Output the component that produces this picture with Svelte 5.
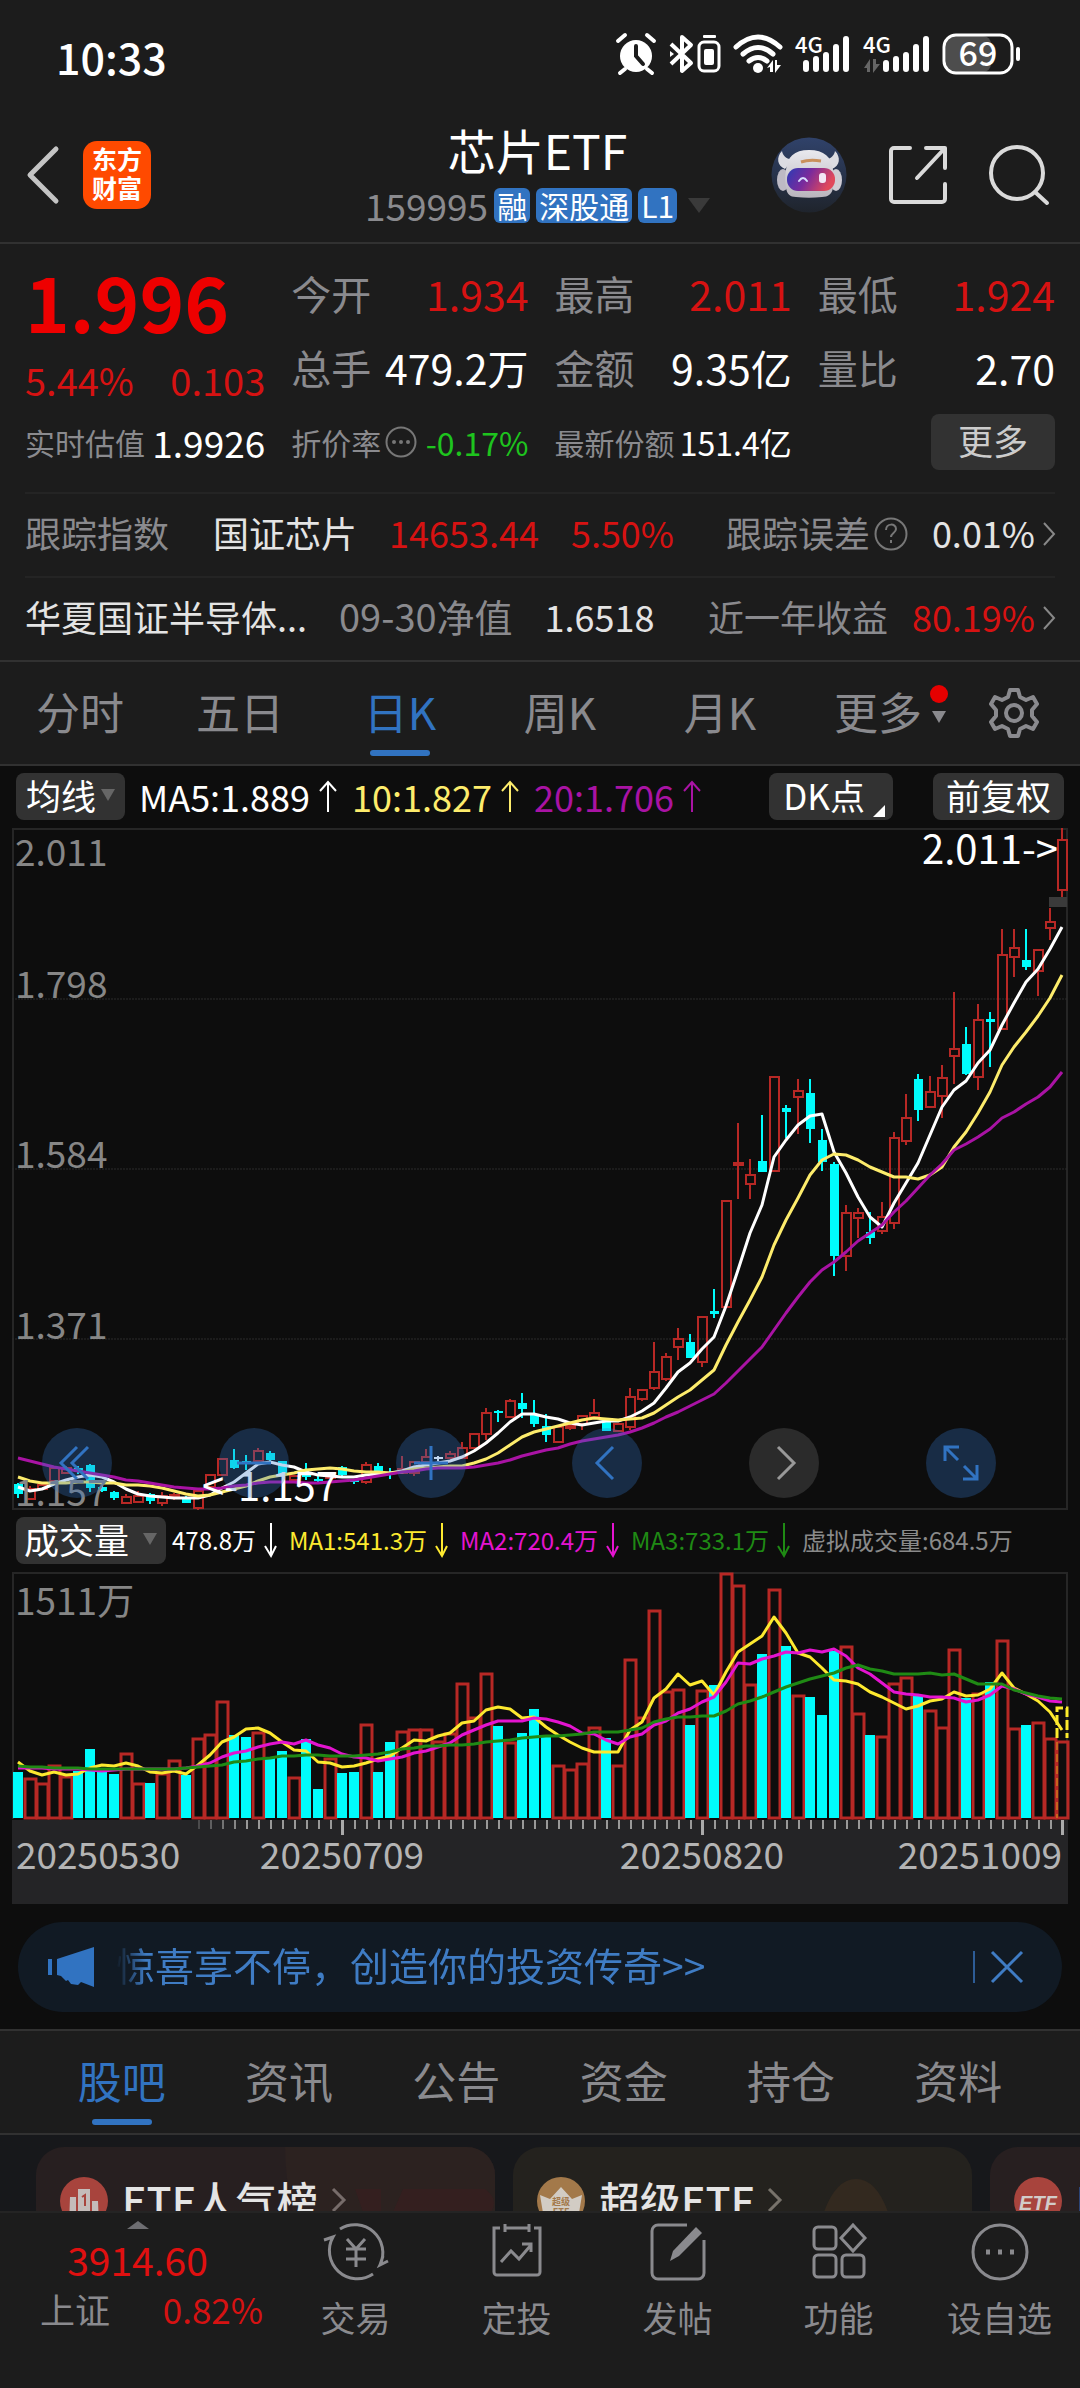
<script>
  // ETF quote page: header, quote table, daily K chart, volume chart, bottom bar

  const step = 12;
  const first = 6;
  const cx = (i) => first + i * step;

  // [up, high, body top, body bottom, low] in chart units, 0 is 2.011 and 682 is 1.157
  const candles = [
    [0, 655, 656, 666, 670], [1, 658, 661, 671, 671], [1, 656, 657, 661, 661], [1, 640, 640, 653, 653],
    [1, 638, 640, 645, 645], [0, 638, 640, 644, 646], [0, 636, 637, 660, 664], [0, 655, 659, 663, 664],
    [0, 663, 664, 670, 672], [1, 666, 669, 675, 676], [1, 663, 668, 674, 674], [0, 665, 666, 673, 676],
    [1, 664, 668, 675, 678], [1, 665, 667, 669, 672], [0, 668, 669, 675, 675], [1, 661, 663, 680, 682],
    [1, 647, 647, 659, 659], [1, 631, 631, 647, 647], [0, 621, 632, 640, 641], [0, 627, 633, 635, 642],
    [1, 620, 623, 633, 635], [0, 623, 625, 632, 633], [0, 633, 633, 647, 647], [1, 647, 648, 652, 652],
    [0, 635, 646, 649, 652], [0, 646, 651, 653, 654], [1, 644, 645, 650, 650], [0, 638, 639, 647, 650],
    [0, 651, 652, 654, 656], [1, 634, 637, 654, 656], [0, 635, 638, 643, 644], [0, 640, 645, 646, 651],
    [1, 628, 641, 645, 645], [1, 634, 634, 645, 648], [1, 621, 629, 634, 634], [2, 628, 629, 631, 633],
    [1, 623, 626, 630, 630], [1, 614, 620, 630, 630], [1, 606, 606, 620, 620], [1, 580, 585, 606, 612],
    [0, 582, 583, 585, 594], [1, 571, 573, 589, 589], [0, 565, 575, 581, 590], [0, 572, 587, 596, 599],
    [0, 586, 598, 607, 614], [1, 599, 599, 614, 614], [1, 596, 598, 600, 602], [1, 588, 588, 596, 602],
    [1, 571, 585, 589, 589], [0, 593, 594, 603, 603], [1, 596, 596, 603, 603], [1, 560, 569, 599, 602],
    [1, 562, 562, 571, 573], [1, 514, 544, 560, 562], [1, 525, 529, 551, 553], [1, 500, 511, 519, 532],
    [0, 506, 514, 530, 530], [1, 489, 489, 534, 539], [0, 461, 483, 486, 490], [1, 373, 373, 479, 479],
    [1, 295, 335, 337, 371], [1, 331, 347, 356, 371], [0, 287, 333, 344, 344], [1, 249, 249, 343, 343],
    [0, 277, 280, 284, 310], [1, 251, 263, 269, 306], [0, 251, 265, 301, 315], [0, 301, 312, 334, 343],
    [0, 334, 336, 428, 448], [1, 377, 385, 428, 443], [1, 380, 385, 390, 410], [0, 384, 404, 410, 416],
    [1, 374, 389, 403, 406], [1, 304, 310, 395, 401], [1, 266, 290, 313, 317], [0, 246, 251, 282, 293],
    [1, 248, 264, 279, 279], [1, 237, 250, 268, 290], [1, 164, 221, 228, 256], [0, 199, 216, 246, 247],
    [1, 176, 192, 249, 262], [0, 184, 191, 194, 239], [1, 101, 127, 201, 201], [1, 101, 120, 129, 149],
    [0, 101, 132, 139, 142], [1, 122, 122, 143, 168], [1, 80, 94, 100, 112], [1, 0, 12, 62, 69],
  ];

  const ma5 = [
    659, 663, 661, 656, 652, 649, 647, 649, 654, 661, 666, 668, 669, 670, 670, 670, 667, 660, 654, 645, 636, 634,
    637, 639, 644, 647, 648, 649, 649, 647, 646, 645, 643, 639, 637, 635, 633, 629, 623, 615, 605, 594, 586, 586,
    589, 591, 595, 597, 595, 593, 593, 589, 583, 575, 560, 544, 535, 521, 509, 478, 442, 405, 377, 329, 312, 297,
    288, 286, 324, 345, 369, 389, 399, 375, 355, 335, 307, 279, 262, 253, 235, 222, 197, 175, 154, 141, 121, 99,
  ];
  const ma10 = [
    649, 653, 655, 655, 655, 654, 654, 655, 655, 657, 657, 658, 660, 663, 666, 668, 667, 664, 661, 658, 653, 649,
    647, 645, 642, 641, 640, 641, 643, 644, 644, 645, 644, 641, 640, 639, 638, 638, 635, 631, 625, 617, 609, 604,
    601, 598, 595, 592, 590, 591, 592, 591, 590, 585, 577, 569, 562, 552, 542, 517, 494, 472, 449, 417, 392, 370,
    347, 332, 326, 327, 332, 339, 344, 349, 349, 351, 347, 339, 319, 304, 285, 264, 237, 219, 204, 188, 170, 147,
  ];
  const ma20 = [
    630, 633, 636, 639, 641, 643, 645, 647, 649, 652, 653, 655, 657, 659, 660, 661, 661, 660, 658, 657, 655, 654,
    654, 654, 655, 655, 654, 653, 652, 650, 648, 646, 644, 643, 641, 640, 640, 640, 639, 637, 635, 632, 628, 625,
    622, 620, 616, 613, 611, 609, 607, 604, 600, 595, 589, 584, 578, 572, 566, 555, 543, 531, 519, 502, 485, 469,
    454, 442, 434, 424, 413, 405, 397, 384, 373, 360, 347, 336, 322, 316, 309, 301, 290, 284, 276, 269, 259, 244,
  ];

  // top edge of every volume bar, the base line is 246
  const volumes = [
    200, 206, 211, 193, 204, 199, 177, 199, 202, 181, 211, 211, 201, 188, 203, 166, 162, 129, 163, 165, 160, 186,
    179, 205, 167, 217, 186, 201, 200, 152, 200, 170, 159, 157, 157, 169, 161, 111, 145, 101, 154, 170, 161, 137,
    165, 193, 197, 191, 155, 166, 193, 87, 145, 38, 119, 117, 153, 118, 113, 1, 13, 112, 82, 17, 74, 123,
    125, 143, 79, 74, 141, 163, 164, 111, 105, 124, 138, 155, 77, 126, 121, 110, 68, 156, 153, 150, 166, 169,
  ];
  const vol1 = [
    190, 199, 203, 200, 203, 202, 196, 193, 194, 191, 194, 200, 201, 199, 202, 193, 183, 170, 165, 157, 156, 161,
    170, 178, 179, 190, 191, 195, 194, 191, 187, 184, 176, 168, 169, 164, 161, 151, 149, 138, 135, 137, 146, 145,
    155, 163, 170, 176, 180, 180, 180, 158, 150, 126, 117, 102, 113, 109, 123, 100, 80, 72, 64, 45, 61, 81,
    85, 96, 108, 109, 112, 120, 125, 131, 137, 134, 129, 127, 120, 124, 123, 117, 101, 116, 122, 129, 140, 158,
  ];
  const vol2 = [
    196, 196, 196, 197, 197, 197, 198, 199, 198, 197, 197, 197, 197, 197, 196, 194, 191, 185, 181, 179, 175, 172,
    170, 172, 168, 173, 176, 182, 185, 186, 189, 187, 185, 181, 179, 175, 171, 163, 158, 153, 149, 149, 149, 146,
    147, 150, 154, 161, 162, 168, 172, 165, 162, 153, 149, 141, 137, 130, 125, 110, 91, 92, 87, 84, 80, 81,
    78, 80, 77, 84, 96, 102, 111, 120, 122, 123, 125, 125, 126, 130, 128, 123, 114, 117, 122, 125, 129, 130,
  ];
  const vol3 = [
    194, 195, 195, 196, 196, 196, 197, 197, 197, 197, 197, 197, 197, 197, 196, 195, 194, 193, 190, 189, 187, 186,
    184, 184, 183, 183, 184, 184, 184, 183, 182, 180, 177, 176, 174, 174, 173, 173, 172, 170, 169, 168, 166, 165,
    164, 164, 163, 162, 160, 160, 160, 158, 156, 150, 147, 145, 145, 144, 144, 139, 132, 129, 125, 120, 115, 111,
    107, 104, 101, 96, 93, 97, 99, 102, 102, 102, 101, 103, 102, 107, 112, 112, 112, 118, 121, 124, 126, 127,
  ];

  const line = (values) => values.map((y, i) => `${cx(i)},${y}`).join(" ");

  const stats = [
    ["今开", "1.934", "red"],
    ["最高", "2.011", "red"],
    ["最低", "1.924", "red"],
    ["总手", "479.2万", ""],
    ["金额", "9.35亿", ""],
    ["量比", "2.70", ""],
  ];

  const grid = [
    [38, "2.011"],
    [170, "1.798"],
    [340, "1.584"],
    [511, "1.371"],
    [678, "1.157"],
  ];

  const periods = ["分时", "五日", "日K", "周K", "月K"];
  const sections = ["股吧", "资讯", "公告", "资金", "持仓", "资料"];

  const averages = [
    ["MA5:1.889", "white"],
    ["10:1.827", "yellow"],
    ["20:1.706", "purple"],
  ];
  const volumeAverages = [
    ["478.8万", "white"],
    ["MA1:541.3万", "lemon"],
    ["MA2:720.4万", "magenta"],
    ["MA3:733.1万", "green"],
  ];

  let period = $state("日K");
  let section = $state("股吧");
  let showBanner = $state(true);
</script>

{#snippet bars(x)}
  {#each [12, 16, 20, 28, 36] as h, i}
    <rect x={x + i * 10} y={38 - h} width="6" height={h} rx="3" />
  {/each}
{/snippet}

<div class="page">
  <div class="status">
    <span class="time">10:33</span>
    <svg width="408" height="44" viewBox="0 0 408 44" fill="#fff" aria-hidden="true">
      <!-- alarm -->
      <circle cx="20" cy="22" r="16" />
      <path d="M2 7l7-6M38 7l-7-6M9 35l-5 4M31 35l5 4" stroke="#fff" stroke-width="4" stroke-linecap="round" />
      <path d="M20 12v10l7 8" fill="none" stroke="#1c1c1c" stroke-width="4" stroke-linecap="round" />
      <!-- bluetooth and device battery -->
      <path d="M55 10l20 19-9 8V3l9 8-20 19" fill="none" stroke="#fff" stroke-width="4" stroke-linejoin="round" />
      <path d="M54 17l4 3-4 3z" />
      <rect x="87" y="1" width="13" height="3" rx="1" />
      <rect x="83" y="8" width="20" height="29" rx="5" fill="none" stroke="#fff" stroke-width="3" />
      <rect x="88" y="15" width="10" height="16" rx="2" />
      <!-- wifi -->
      <g fill="none" stroke="#fff" stroke-width="5" stroke-linecap="round">
        <path d="M120 13q22-20 44 0" />
        <path d="M127 20q15-13 30 0" />
        <path d="M133 27q9-7 18 0" />
      </g>
      <circle cx="142" cy="34" r="5" />
      <path d="M151 34l6-8v12h-3v-5zM159 26h2v5h4l-6 8z" />
      <!-- mobile signals -->
      <text x="179" y="19" class="net">4G</text>
      {@render bars(187)}
      <text x="247" y="19" class="net">4G</text>
      <path d="M248 34l6-9v13h-3v-4zM257 25h3v5h4l-7 9z" fill="#666" />
      {@render bars(267)}
      <!-- battery -->
      <rect x="330" y="2" width="45" height="36" fill="#4d4d4d" rx="8" />
      <rect x="328" y="1" width="68" height="38" rx="12" fill="none" stroke="#fff" stroke-width="3" />
      <rect x="400" y="13" width="4" height="14" rx="2" />
      <text x="362" y="32" class="level">69</text>
    </svg>
  </div>

  <header>
    <div class="side">
      <button class="plain" aria-label="返回">
        <svg width="34" height="60" viewBox="0 0 34 60" fill="none" stroke="#c4c4c4" stroke-width="5" stroke-linecap="round" stroke-linejoin="round">
          <path d="M30 4L4 30l26 26" />
        </svg>
      </button>
      <div class="logo"><span>东方</span><span>财富</span></div>
    </div>
    <div class="title">
      <h1>芯片ETF</h1>
      <div class="code">
        <span>159995</span>
        <b>融</b><b>深股通</b><b>L1</b>
        <svg width="22" height="15" viewBox="0 0 22 15"><path d="M0 0h22L11 15z" fill="#3a3a3a" /></svg>
      </div>
    </div>
    <div class="side end">
      <button class="plain" aria-label="智能助手">
        <svg width="76" height="76" viewBox="0 0 76 76">
          <defs>
            <linearGradient id="disc" x1="0" y1="0" x2="0" y2="1">
              <stop offset="0" stop-color="#30426a" />
              <stop offset="1" stop-color="#1f242c" />
            </linearGradient>
            <linearGradient id="visor" x1="0" y1="0" x2="1" y2="0.3">
              <stop offset="0" stop-color="#2b3bb5" />
              <stop offset="0.5" stop-color="#7a2a9c" />
              <stop offset="1" stop-color="#e0485c" />
            </linearGradient>
            <linearGradient id="helmet" x1="0" y1="0" x2="0" y2="1">
              <stop offset="0" stop-color="#e9e9ee" />
              <stop offset="1" stop-color="#b9b5bd" />
            </linearGradient>
          </defs>
          <circle cx="38" cy="38" r="37.5" fill="url(#disc)" />
          <path d="M11 14c-6 6-5 15 3 18l8-10c-6 1-10-3-11-8zM64 14c6 6 5 15-3 18l-8-10c6 1 10-3 11-8z" fill="#dcdce2" />
          <ellipse cx="12" cy="43" rx="6" ry="11" fill="#bdbac4" />
          <ellipse cx="65" cy="43" rx="6" ry="11" fill="#cfccd4" />
          <path d="M38 13c15 0 23 7 24 20 1 6 1 13 0 18-1 6-5 9-11 9-9 1-17 1-26 0-6 0-9-3-10-9-1-6-1-12 0-18 1-13 8-20 23-20z" fill="url(#helmet)" />
          <rect x="16" y="31" width="48" height="23" rx="11" fill="url(#visor)" />
          <path d="M30 25c6-2 13-2 20-1" stroke="#c9905c" stroke-width="3" fill="none" />
          <path d="M28 44q4-6 8 0" stroke="#d9dcff" stroke-width="2" fill="none" stroke-linecap="round" />
          <rect x="48" y="36" width="7" height="10" rx="3" fill="#f3e6f5" />
        </svg>
      </button>
      <button class="plain" aria-label="分享">
        <svg width="60" height="60" viewBox="0 0 60 60" fill="none" stroke="#dadada" stroke-width="4" stroke-linecap="round" stroke-linejoin="round">
          <path d="M22 3H6a3 3 0 0 0-3 3v48a3 3 0 0 0 3 3h48a3 3 0 0 0 3-3V39M38 3h19v20M57 3L29 33" />
        </svg>
      </button>
      <button class="plain" aria-label="搜索">
        <svg width="60" height="60" viewBox="0 0 60 60" fill="none" stroke="#dadada" stroke-width="4" stroke-linecap="round">
          <circle cx="28" cy="28" r="26" />
          <path d="M46 47l12 11" />
        </svg>
      </button>
    </div>
  </header>

  <section class="quote">
    <div class="last">
      <strong>1.996</strong>
      <div class="change"><span>5.44%</span><span>0.103</span></div>
    </div>
    {#each stats as [name, value, tone]}
      <div class="stat"><span>{name}</span><em class={tone}>{value}</em></div>
    {/each}
    <div class="stat small"><span>实时估值</span><em class="wide">1.9926</em></div>
    <div class="stat small">
      <span class="tip">
        折价率
        <svg width="32" height="32" viewBox="0 0 32 32" fill="#777"><circle cx="16" cy="16" r="14.5" fill="none" stroke="#777" stroke-width="2" /><circle cx="9" cy="16" r="2" /><circle cx="16" cy="16" r="2" /><circle cx="23" cy="16" r="2" /></svg>
      </span>
      <em class="down">-0.17%</em>
    </div>
    <div class="stat small"><span>最新份额</span><em>151.4亿</em></div>
    <div class="more"><button>更多</button></div>
  </section>

  <section class="facts">
    <a class="fact" href="#index">
      <span class="mute name">跟踪指数</span>
      <span>国证芯片</span>
      <span class="red">14653.44</span>
      <span class="red">5.50%</span>
      <span class="mute tip right">
        跟踪误差
        <svg width="34" height="34" viewBox="0 0 34 34" fill="none" stroke="#777" stroke-width="2"><circle cx="17" cy="17" r="15.5" /><path d="M12 13c0-7 10-7 10-1 0 4-5 4-5 8" /><path d="M17 23v3" /></svg>
      </span>
      <span class="result">
        0.01%
        <svg width="12" height="24" viewBox="0 0 12 24" fill="none" stroke="#888" stroke-width="2"><path d="M1 1l10 11L1 23" /></svg>
      </span>
    </a>
    <a class="fact" href="#fund">
      <span>华夏国证半导体...</span>
      <span class="mute nav">09-30净值</span>
      <span>1.6518</span>
      <span class="mute right">近一年收益</span>
      <span class="result red">
        80.19%
        <svg width="12" height="24" viewBox="0 0 12 24" fill="none" stroke="#888" stroke-width="2"><path d="M1 1l10 11L1 23" /></svg>
      </span>
    </a>
  </section>

  <nav class="tabs periods">
    {#each periods as name}
      <button class:active={period === name} onclick={() => (period = name)}>{name}</button>
    {/each}
    <button class="others">
      更多
      <svg width="18" height="40" viewBox="0 0 18 40"><circle cx="9" cy="7" r="9" fill="#e60000" /><path d="M2 24h14L9 36z" fill="#8a8a8e" /></svg>
    </button>
    <button class="gear" aria-label="设置">
      <svg width="52" height="52" viewBox="0 0 52 52" fill="none" stroke="#8a8a8e" stroke-width="4" stroke-linejoin="round">
        <path d="M22 3h8l2 7 6 3 7-3 4 7-5 6v6l5 6-4 7-7-3-6 3-2 7h-8l-2-7-6-3-7 3-4-7 5-6v-6l-5-6 4-7 7 3 6-3z" />
        <circle cx="26" cy="26" r="8" />
      </svg>
    </button>
  </nav>

  <main>
    <div class="legend">
      <button class="chip">均线<svg width="14" height="12" viewBox="0 0 14 12"><path d="M0 0h14L7 12z" fill="#666" /></svg></button>
      {#each averages as [text, tone]}
        <span class={tone}>
          {text}
          <svg width="20" height="32" viewBox="0 0 20 32" fill="none" stroke="currentColor" stroke-width="2"><path d="M10 32V2M2 11l8-9 8 9" /></svg>
        </span>
      {/each}
      <button class="chip dk">DK点<svg width="12" height="12" viewBox="0 0 12 12"><path d="M12 0v12H0z" fill="#fff" /></svg></button>
      <button class="chip adjust">前复权</button>
    </div>

    <div class="chart">
      <svg viewBox="0 0 1056 682">
        <g fill="none" stroke="#262626" stroke-width="2">
          <path d="M1 1h1054v680H1z" />
          <path d="M0 171h1056M0 341h1056M0 511h1056" stroke="#2c2c2c" stroke-width="1" stroke-dasharray="2 1" />
        </g>
        <rect x="1037" y="69" width="18" height="10" fill="#3a3a3a" />
        {#each candles as [up, high, top, bottom, low], i}
          {#if up === 1}
            <g fill="none" stroke="#b72825" stroke-width="2">
              <path d="M{cx(i)} {high}V{top}M{cx(i)} {bottom}V{low}" />
              <rect x={cx(i) - 4} y={top} width="9" height={bottom - top} />
            </g>
          {:else}
            <g fill={up ? "#fff" : "#00fcfc"}>
              <rect x={cx(i) - 1} y={high} width="2" height={low - high} />
              <rect x={cx(i) - 4} y={top} width="9" height={bottom - top} />
            </g>
          {/if}
        {/each}
        <g fill="none" stroke-width="3" stroke-linejoin="round">
          <polyline points={line(ma5)} stroke="#fff" />
          <polyline points={line(ma10)} stroke="#fdec6c" />
          <polyline points={line(ma20)} stroke="#a913a4" />
        </g>
        {#each grid as [y, label]}
          <text x="3" {y} class="scale">{label}</text>
        {/each}
        <text x="1046" y="36" class="mark" text-anchor="end">2.011-&gt;</text>
        <text x="190" y="673" class="mark">&lt;-1.157</text>
      </svg>
      <div class="tools">
        <button aria-label="最早"><svg viewBox="0 0 70 70"><path d="M35 19L19 35l16 16M46 19L30 35l16 16" /></svg></button>
        <button aria-label="缩小"><svg viewBox="0 0 70 70"><path d="M18 35h34" /></svg></button>
        <button aria-label="放大"><svg viewBox="0 0 70 70"><path d="M18 35h34M35 18v34" /></svg></button>
        <button aria-label="前移"><svg viewBox="0 0 70 70"><path d="M41 19L25 35l16 16" /></svg></button>
        <button aria-label="后移" class="off"><svg viewBox="0 0 70 70"><path d="M29 19l16 16-16 16" /></svg></button>
        <button aria-label="全屏"><svg viewBox="0 0 70 70"><path d="M19 33V19h14M19 19l13 13M51 37v14H37M51 51L38 38" /></svg></button>
      </div>
    </div>

    <div class="legend volume">
      <button class="chip">成交量<svg width="14" height="12" viewBox="0 0 14 12"><path d="M0 0h14L7 12z" fill="#666" /></svg></button>
      {#each volumeAverages as [text, tone]}
        <span class={tone}>
          {text}
          <svg width="13" height="34" viewBox="0 0 13 34" fill="none" stroke="currentColor" stroke-width="2"><path d="M7 0v32M1 23l6 10 5-10" /></svg>
        </span>
      {/each}
      <span class="grey">虚拟成交量:684.5万</span>
    </div>

    <div class="chart">
      <svg viewBox="0 0 1056 332">
        <path d="M1 247V1h1054v246" fill="none" stroke="#262626" stroke-width="2" />
        {#each volumes as top, i}
          {#if candles[i][0]}
            <rect x={cx(i) - 5} y={top + 1} width="11" height={245 - top} fill="none" stroke="#b72825" stroke-width="3" />
          {/if}
        {/each}
        {#each volumes as top, i}
          {#if !candles[i][0]}
            <rect x={cx(i) - 5} y={top} width="10" height={246 - top} fill="#00fcfc" />
          {/if}
        {/each}
        <path d="M1045 166V136h10v30" fill="none" stroke="#fdec2c" stroke-width="3" stroke-dasharray="10 3" />
        <path d="M1045 170v76" stroke="#c8641e" stroke-width="2" stroke-dasharray="8 4" />
        <g fill="none" stroke-width="3" stroke-linejoin="round">
          <polyline points={line(vol1)} stroke="#fde92f" />
          <polyline points={line(vol2)} stroke="#e414d0" />
          <polyline points={line(vol3)} stroke="#1f8a14" />
        </g>
        <text x="3" y="43" class="scale">1511万</text>

        <rect y="248" width="1056" height="84" fill="#242426" />
        {#each volumes as _, i}
          {#if i === 27 || i === 57 || i === 87}
            <rect x={cx(i) - 1} y="248" width="3" height="15" fill="#aaa" />
          {:else if i > 14}
            <rect x={cx(i)} y="248" width="2" height="9" fill="#999" opacity={Math.min(1, (i - 13) / 6)} />
          {/if}
        {/each}
        <g class="dates">
          <text x="4" y="297">20250530</text>
          <text x="330" y="297" text-anchor="middle">20250709</text>
          <text x="690" y="297" text-anchor="middle">20250820</text>
          <text x="1050" y="297" text-anchor="end">20251009</text>
        </g>
      </svg>
    </div>

    {#if showBanner}
      <div class="banner">
        <svg width="46" height="40" viewBox="0 0 46 40" fill="#3173c1"><path d="M0 12h4v16H0zM9 12L46 0v40l-13-5-3 3-7-1-3-4-2 1-5-5-4-1z" /></svg>
        <a href="#promo">惊喜享不停，创造你的投资传奇&gt;&gt;</a>
        <button class="plain" aria-label="关闭" onclick={() => (showBanner = false)}>
          <svg width="32" height="32" viewBox="0 0 32 32" stroke="#3f7cc4" stroke-width="3"><path d="M1 1l30 30M31 1L1 31" /></svg>
        </button>
      </div>
    {/if}
  </main>

  <nav class="tabs sections">
    {#each sections as name}
      <button class:active={section === name} onclick={() => (section = name)}>{name}</button>
    {/each}
  </nav>

  <div class="cards">
    <a class="card rank" href="#rank">
      <svg width="48" height="48" viewBox="0 0 48 48">
        <circle cx="24" cy="24" r="24" fill="#a8443d" />
        <path d="M10 20h6v28h-7zM18 12h12v36H18zM32 24h6l1 24h-7z" fill="#c4bcba" />
        <path d="M22 20l3-2v11" fill="none" stroke="#a8443d" stroke-width="2" />
      </svg>
      ETF人气榜
      <svg width="13" height="24" viewBox="0 0 13 24" fill="none" stroke="#776c6a" stroke-width="3"><path d="M1 1l11 11L1 23" /></svg>
      <svg class="art" width="210" height="65" viewBox="0 0 210 65"><path d="M0 0h210v65H8Q0 30 0 0z" fill="#2c2220" /><path d="M70 42h26v23H78zM118 42h82q14 10 6 23H108z" fill="#341f1f" /></svg>
    </a>
    <a class="card super" href="#super">
      <svg width="48" height="48" viewBox="0 0 48 48">
        <circle cx="24" cy="24" r="24" fill="#a3794a" />
        <path d="M3 18l10 4 11-12 11 12 10-4-5 30H8z" fill="#d2ccc4" />
        <text x="24" y="28" class="badge">超级</text>
        <text x="24" y="38" class="badge">ETF</text>
      </svg>
      超级ETF
      <svg width="13" height="24" viewBox="0 0 13 24" fill="none" stroke="#77726a" stroke-width="3"><path d="M1 1l11 11L1 23" /></svg>
      <svg class="art" width="150" height="65" viewBox="0 0 150 65"><path d="M2 65Q14 32 34 32t32 33z" fill="#33291f" /></svg>
    </a>
    <a class="card rank" href="#etf">
      <svg width="48" height="48" viewBox="0 0 48 48">
        <circle cx="24" cy="24" r="24" fill="#a8443d" />
        <text x="24" y="33" class="etf">ETF</text>
      </svg>
      ETF
    </a>
  </div>

  <footer>
    <a class="index" href="#sse">
      <svg width="22" height="8" viewBox="0 0 22 8"><path d="M0 8L11 0l11 8z" fill="#6e6e72" /></svg>
      <strong>3914.60</strong>
      <div><span>上证</span><em>0.82%</em></div>
    </a>
    <button>
      <svg viewBox="0 0 66 60"><path d="M17 7A28 28 0 0 1 57 43l8-4M57 43l3-9M1 18l9-3A28 28 0 0 0 50 52M24 17l9 10 9-10M23 27h20M23 37h20M33 27v18" /></svg>
      交易
    </button>
    <button>
      <svg viewBox="0 0 66 60"><path d="M16 6h-6v44a3 3 0 0 0 3 3h40a3 3 0 0 0 3-3V6h-6M21 2v8M45 2v8M21 6h24M17 40l10-11 8 8 12-14M38 22h9v8" /></svg>
      定投
    </button>
    <button>
      <svg viewBox="0 0 66 60"><path d="M42 3H13a6 6 0 0 0-6 6v42a6 6 0 0 0 6 6h40a6 6 0 0 0 6-6V18" /><path d="M25 39l3-10L51 5l6 6-23 23z" fill="#8a8a8e" stroke="none" /></svg>
      发帖
    </button>
    <button>
      <svg viewBox="0 0 66 60"><rect x="8" y="5" width="22" height="22" rx="4" /><rect x="8" y="33" width="22" height="22" rx="4" /><rect x="36" y="33" width="22" height="22" rx="4" /><path d="M47 3l12 13-12 13-12-13z" /></svg>
      功能
    </button>
    <button>
      <svg viewBox="0 0 66 60"><circle cx="33" cy="30" r="27" /><path d="M19 30h4M31 30h4M43 30h4" stroke-width="5" /></svg>
      设自选
    </button>
  </footer>
</div>

<style>
  :global(body) {
    background: #1c1c1c;
  }

  .page {
    font-family: "Noto Sans CJK SC", "Noto Sans", sans-serif;
    font-size: 36px;
    line-height: 44px;
    color: #e4e4e4;
    background: #1c1c1c;
    overflow: hidden;
  }

  button {
    font: inherit;
    color: inherit;
    border: 0;
    padding: 0;
    background: none;
    cursor: pointer;
  }

  a {
    color: inherit;
    text-decoration: none;
  }

  em {
    font-style: normal;
  }

  svg {
    flex: none;
    overflow: visible;
  }

  .plain {
    display: flex;
  }

  .red {
    color: #d61212;
  }

  /* status bar */
  .status {
    display: flex;
    align-items: center;
    justify-content: space-between;
    height: 76px;
    padding: 18px 56px 10px;
  }

  .time {
    font-size: 43px;
    font-weight: 500;
    color: #fff;
  }

  .net {
    font-size: 22px;
    font-weight: 500;
  }

  .level {
    font-size: 34px;
    font-weight: 500;
    text-anchor: middle;
  }

  /* header */
  header {
    display: flex;
    align-items: center;
    height: 134px;
    padding: 4px 31px 0 26px;
    border-bottom: 2px solid #313131;
  }

  .side {
    display: flex;
    align-items: center;
    flex: 1;
    gap: 23px;
  }

  .end {
    justify-content: flex-end;
    gap: 41px;
  }

  .logo {
    display: flex;
    flex-direction: column;
    padding: 3px 9px 7px;
    border-radius: 14px;
    font-size: 25px;
    font-weight: 700;
    line-height: 29px;
    color: #fff;
    background: #ff4a00;
  }

  .title {
    display: flex;
    flex-direction: column;
    align-items: center;
    gap: 8px;
  }

  h1 {
    margin: 0;
    font-size: 48px;
    font-weight: 400;
    line-height: 52px;
    color: #fff;
  }

  .code {
    display: flex;
    align-items: center;
    gap: 6px;
    color: #8a8a8e;
  }

  .code span {
    font-size: 37px;
  }

  .code b {
    padding: 0 3px;
    border-radius: 6px;
    font-size: 30px;
    font-weight: 400;
    line-height: 35px;
    color: #fff;
    background: #3173c1;
  }

  .code svg {
    margin-left: 5px;
  }

  /* quote table */
  .quote {
    display: grid;
    grid-template-columns: 240fr 237fr 237fr 237fr;
    grid-template-rows: 74px 74px 76px;
    column-gap: 26px;
    padding: 12px 25px;
  }

  .last {
    grid-row: span 2;
    display: flex;
    flex-direction: column;
    justify-content: space-between;
    padding: 6px 0 2px;
    color: #d61212;
  }

  .last strong {
    font-size: 76px;
    font-weight: 700;
    line-height: 76px;
    color: #ee0000;
  }

  .change {
    display: flex;
    justify-content: space-between;
    font-size: 38px;
  }

  .stat {
    display: flex;
    align-items: center;
    justify-content: space-between;
    font-size: 40px;
    color: #8a8a8e;
    white-space: nowrap;
  }

  .stat em {
    font-size: 41px;
    color: #fff;
  }

  .stat em.red {
    color: #d61212;
  }

  .small span {
    font-size: 30px;
  }

  .small em {
    font-size: 32px;
  }

  .stat em.down {
    color: #1ec41e;
  }

  .small .wide {
    font-size: 37px;
  }

  .tip {
    display: flex;
    align-items: center;
    gap: 4px;
  }

  .more {
    display: flex;
    align-items: center;
    justify-content: flex-end;
  }

  .more button {
    padding: 4px 27px 8px;
    border-radius: 8px;
    font-size: 35px;
    color: #ccc;
    background: #323232;
  }

  /* tracked index and fund rows */
  .facts {
    padding: 0 25px;
  }

  .fact {
    display: flex;
    align-items: center;
    gap: 32px;
    height: 76px;
    padding-bottom: 6px;
    border-top: 2px solid #242424;
    white-space: nowrap;
  }

  .name {
    margin-right: 12px;
  }

  .nav {
    font-size: 38px;
  }

  .mute {
    color: #8a8a8e;
  }

  .fact svg {
    margin-top: 4px;
  }

  .right {
    margin-left: auto;
  }

  .result {
    display: flex;
    align-items: center;
    gap: 8px;
    margin-left: -8px;
  }

  /* tabs */
  .tabs {
    display: flex;
    height: 102px;
    border-top: 2px solid #313131;
    font-size: 44px;
    color: #8a8a8e;
  }

  .tabs button {
    position: relative;
    flex: 160;
    padding-bottom: 4px;
  }

  .tabs .active {
    color: #3173c1;
  }

  .tabs .active::after {
    content: "";
    position: absolute;
    left: calc(50% - 30px);
    bottom: 8px;
    width: 60px;
    height: 6px;
    border-radius: 3px;
    background: #3173c1;
  }

  .tabs .others {
    display: flex;
    align-items: center;
    justify-content: flex-end;
    gap: 8px;
    flex: 148;
  }

  .others svg {
    margin-bottom: 8px;
  }

  .tabs .gear {
    flex: 132;
    padding-bottom: 0;
  }

  .gear svg {
    display: block;
    margin: 0 auto;
  }

  .sections {
    padding: 0 38px;
    border-bottom: 2px solid #313131;
  }

  /* charts */
  main {
    padding: 0 12px 17px;
    border-top: 2px solid #313131;
    background: #0d0d0d;
  }

  .legend {
    display: flex;
    align-items: center;
    gap: 14px;
    height: 60px;
    padding: 0 4px 2px;
    white-space: nowrap;
  }

  .legend span {
    display: flex;
    align-items: center;
    gap: 8px;
  }

  .chip {
    display: flex;
    align-items: center;
    gap: 5px;
    padding: 0 10px 3px;
    border-radius: 8px;
    font-size: 35px;
    color: #fff;
    background: #323232;
  }

  .dk {
    gap: 8px;
    margin-left: auto;
    margin-right: 26px;
    padding: 0 8px 3px 14px;
  }

  .dk svg {
    align-self: flex-end;
  }

  .adjust {
    padding: 0 13px 3px;
  }

  .white {
    color: #fff;
  }

  .yellow {
    color: #fdec6c;
  }

  .purple {
    color: #a913a4;
  }

  .lemon {
    color: #fde92f;
  }

  .magenta {
    color: #e414d0;
  }

  .green {
    color: #1f8a14;
  }

  .grey {
    color: #8a8a8a;
  }

  .volume {
    gap: 12px;
    font-size: 24px;
  }

  .volume .chip {
    gap: 14px;
    margin-right: -6px;
    padding: 0 9px 3px 8px;
  }

  .chart {
    position: relative;
  }

  .chart > svg {
    display: block;
    width: 100%;
  }

  .scale {
    font-size: 37px;
    fill: #868686;
  }

  .mark {
    font-size: 40px;
    fill: #fff;
  }

  .dates {
    font-size: 37px;
    fill: #b4b4b4;
  }

  .tools {
    position: absolute;
    left: 0;
    right: 0;
    bottom: 12px;
    display: flex;
    justify-content: space-between;
    padding: 0 72px 0 30px;
  }

  .tools button {
    width: 70px;
    height: 70px;
    border-radius: 50%;
    color: #3173c1;
    background: rgba(50, 115, 200, 0.3);
  }

  .tools svg {
    display: block;
    fill: none;
    stroke: currentColor;
    stroke-width: 3;
  }

  .tools .off {
    color: #999;
    background: #2b2b2b;
  }

  /* promo banner */
  .banner {
    display: flex;
    align-items: center;
    gap: 22px;
    height: 90px;
    margin: 18px 6px 0;
    padding: 0 39px 0 30px;
    border-radius: 45px;
    background: #111a24;
  }

  .banner a {
    flex: 1;
    padding-bottom: 6px;
    font-size: 39px;
    color: #3f7cc4;
    -webkit-mask-image: linear-gradient(90deg, transparent, #000 30px);
    mask-image: linear-gradient(90deg, transparent, #000 30px);
  }

  .banner button {
    padding-left: 16px;
    border-left: 2px solid #2d5c96;
  }

  /* ranking cards */
  .cards {
    display: flex;
    gap: 18px;
    height: 64px;
    padding: 12px 0 0 36px;
    overflow: hidden;
    background: #17181b;
  }

  .card {
    position: relative;
    display: flex;
    align-items: flex-start;
    flex: none;
    gap: 14px;
    width: 411px;
    height: 100px;
    padding: 30px 24px 0;
    border-radius: 28px;
    overflow: hidden;
    font-size: 41px;
    font-weight: 500;
  }

  .card svg {
    position: relative;
  }

  .card svg:nth-of-type(2) {
    margin-top: 11px;
  }

  .card .art {
    position: absolute;
    top: 0;
    right: 0;
    z-index: -1;
  }

  .rank {
    isolation: isolate;
    background: #271f20;
  }

  .super {
    isolation: isolate;
    background: #24221e;
  }

  .badge {
    font-size: 9px;
    font-weight: 700;
    fill: #a3794a;
    text-anchor: middle;
  }

  .etf {
    font-family: "Liberation Sans", sans-serif;
    font-size: 20px;
    font-style: italic;
    font-weight: 700;
    fill: #d2ccc9;
    text-anchor: middle;
  }

  /* bottom bar */
  footer {
    display: flex;
    height: 174px;
    border-top: 2px solid #242424;
    font-size: 35px;
    color: #8a8a8e;
  }

  .index {
    display: flex;
    flex-direction: column;
    align-items: center;
    flex: 275;
    padding-top: 8px;
  }

  .index strong {
    margin-top: 8px;
    font-size: 39px;
    font-weight: 400;
    color: #e01010;
  }

  .index div {
    display: flex;
    justify-content: space-between;
    align-self: stretch;
    padding: 6px 12px 0 40px;
  }

  .index em {
    color: #d61212;
  }

  footer button {
    display: flex;
    flex-direction: column;
    align-items: center;
    flex: 161;
    padding-top: 9px;
    gap: 13px;
  }

  footer button svg {
    width: 66px;
    height: 60px;
    fill: none;
    stroke: #8a8a8e;
    stroke-width: 3;
  }
</style>
